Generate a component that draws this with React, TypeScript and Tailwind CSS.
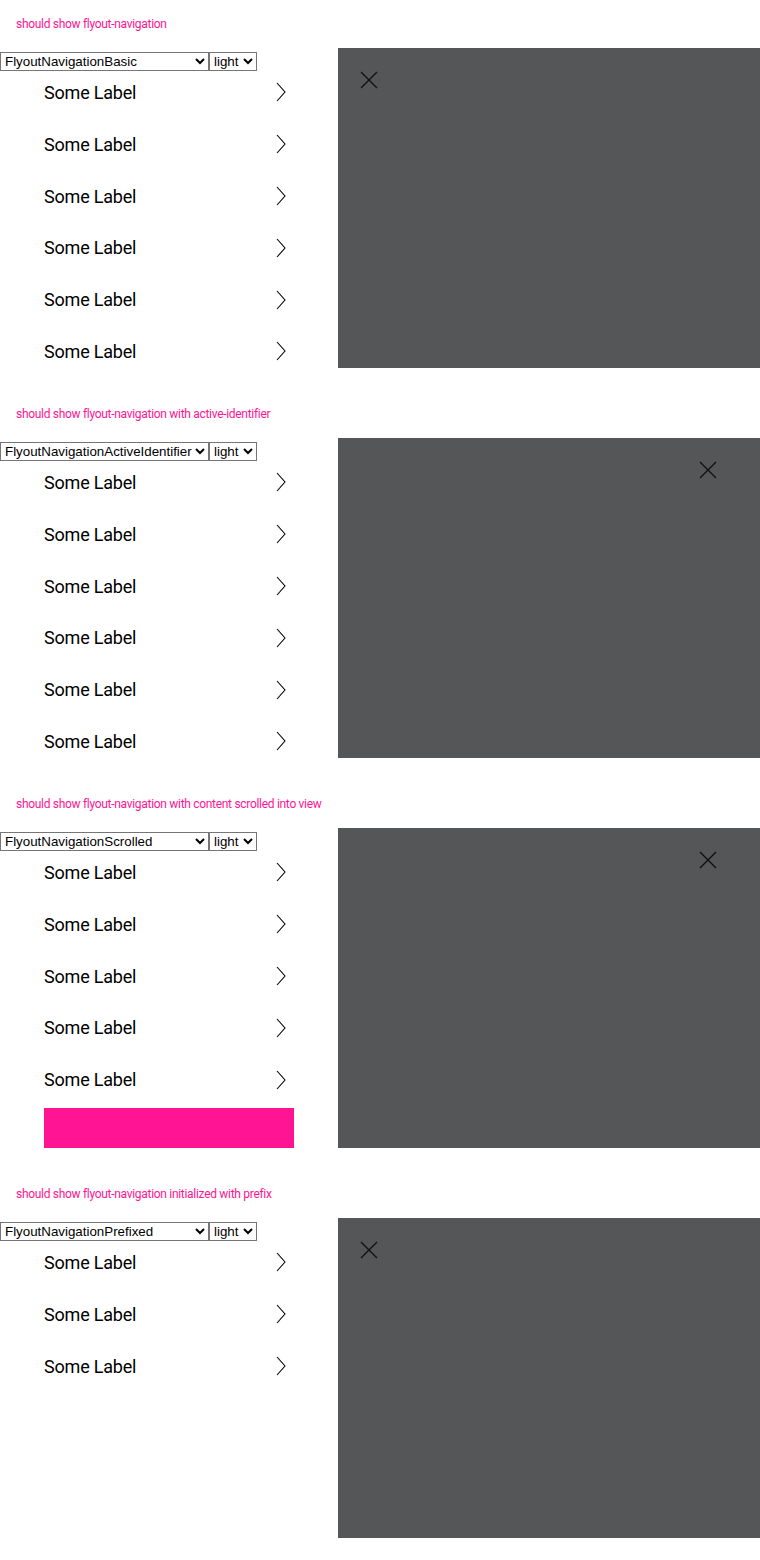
const labels = (n: number) => Array.from({ length: n }, () => 'Some Label');

const Chevron = () => (
  <svg width="10" height="20" viewBox="0 0 10 20" fill="none" className="shrink-0">
    <path d="M1 1 L9 10 L1 19" stroke="#000" strokeWidth="1.1" />
  </svg>
);

const Close = () => (
  <svg width="18" height="18" viewBox="0 0 18 18" fill="none">
    <path d="M1 1 L17 17 M17 1 L1 17" stroke="#111" strokeWidth="1.4" />
  </svg>
);

type DemoProps = {
  title: string;
  story: string;
  items: number;
  closeRight?: boolean;
  scrolled?: boolean;
};

const Demo = ({ title, story, items, closeRight, scrolled }: DemoProps) => {
  return (
    <section className="h-[390px]">
      <div className="h-[48px] pl-4 pt-[16px] text-[12px] leading-4 text-[#ff1493] [font-family:Roboto,sans-serif] tracking-[-0.3px]">
        {title}
      </div>
      <div className="flex">
        <div className="relative w-[338px] h-[320px]">
          <div className="absolute top-1 left-0 flex z-10">
            <select className="w-[209px] h-[19px] border border-[#767676] bg-white text-[13.33px] text-black [font-family:'Liberation_Sans',Arial,sans-serif]">
              <option>{story}</option>
            </select>
            <select className="w-[48px] h-[19px] border border-[#767676] bg-white text-[13.33px] text-black [font-family:'Liberation_Sans',Arial,sans-serif]">
              <option>light</option>
            </select>
          </div>
          <ul className={`pt-[18.6px] ${scrolled ? 'h-[320px] overflow-hidden' : ''}`}>
            {labels(items).map((l, i) => (
              <li key={i} className="h-[51.8px] ml-11 w-[250px] pr-[8px] flex items-center justify-between">
                <span className="text-[18px] text-black [font-family:Roboto,sans-serif] tracking-[-0.2px]">{l}</span>
                <Chevron />
              </li>
            ))}
            {scrolled && <li className="ml-11 mt-[2.4px] w-[250px] h-[40px] bg-[#ff1493]" />}
          </ul>
        </div>
        <div className="relative flex-1 h-[320px] bg-[#555658]">
          <div className={`absolute top-[23px] ${closeRight ? 'right-[43px]' : 'left-[22px]'}`}>
            <Close />
          </div>
        </div>
      </div>
    </section>
  );
};

export default function App() {
  return (
    <div className="w-[760px] bg-white">
      <Demo title="should show flyout-navigation" story="FlyoutNavigationBasic" items={6} />
      <Demo
        title="should show flyout-navigation with active-identifier"
        story="FlyoutNavigationActiveIdentifier"
        items={6}
        closeRight
      />
      <Demo
        title="should show flyout-navigation with content scrolled into view"
        story="FlyoutNavigationScrolled"
        items={5}
        closeRight
        scrolled
      />
      <Demo title="should show flyout-navigation initialized with prefix" story="FlyoutNavigationPrefixed" items={3} />
    </div>
  );
}
